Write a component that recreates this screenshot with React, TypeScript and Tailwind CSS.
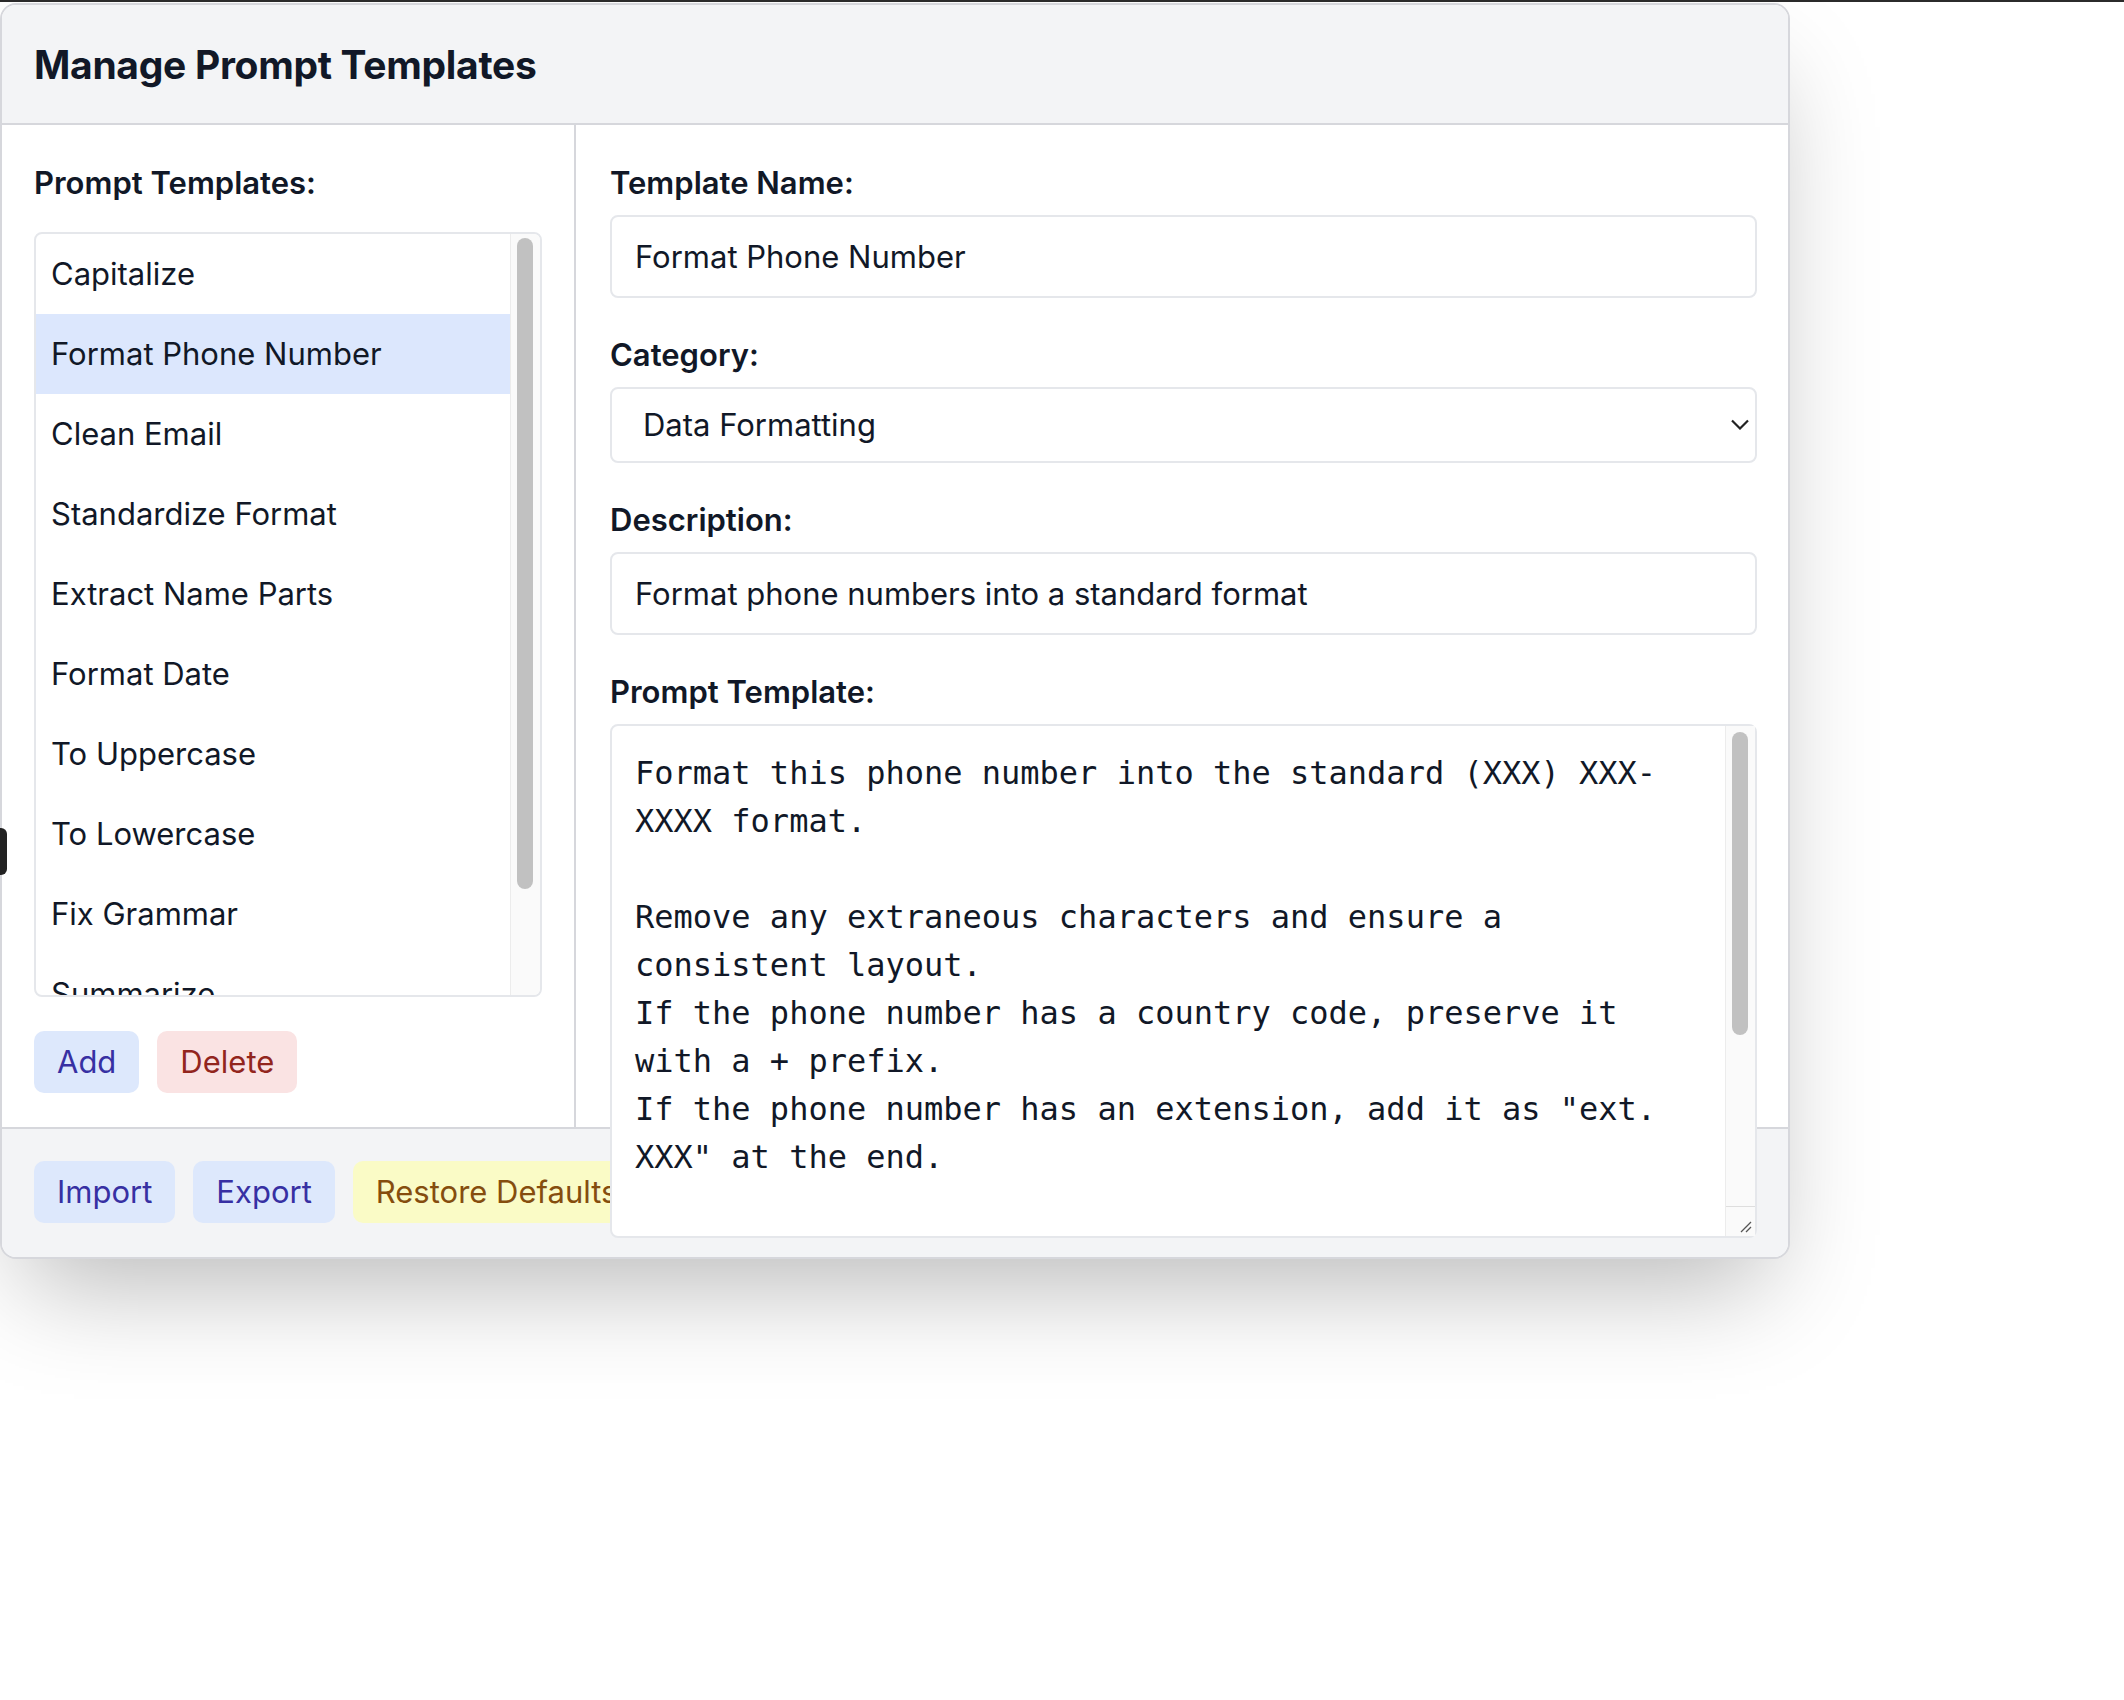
import { useState } from 'react';

const templates = [
  'Capitalize',
  'Format Phone Number',
  'Clean Email',
  'Standardize Format',
  'Extract Name Parts',
  'Format Date',
  'To Uppercase',
  'To Lowercase',
  'Fix Grammar',
  'Summarize',
  'Translate',
];

const promptText =
  'Format this phone number into the standard (XXX) XXX-XXXX format.\n\n' +
  'Remove any extraneous characters and ensure a consistent layout.\n' +
  'If the phone number has a country code, preserve it with a + prefix.\n' +
  'If the phone number has an extension, add it as "ext. XXX" at the end.\n\n' +
  'If the input is not a valid phone number, return it unchanged.\n\n' +
  'Return only the formatted phone number without any explanation.\n\n' +
  'Input: {{input}}';

export default function App() {
  const [selected, setSelected] = useState('Format Phone Number');
  const [name, setName] = useState('Format Phone Number');
  const [category, setCategory] = useState('Data Formatting');
  const [description, setDescription] = useState('Format phone numbers into a standard format');
  const [prompt, setPrompt] = useState(promptText);

  return (
    <div className="min-h-[1700px] bg-white font-['Inter',sans-serif] text-[#111827] relative">
      <div className="h-[2px] w-full bg-[#2b2b2b]" />
      <div className="absolute left-0 top-[828px] w-[7px] h-[47px] rounded-r-[6px] bg-[#222222]" />

      <div className="mt-[1px] w-[1790px] rounded-[16px] border-2 border-[#d6d7dc] bg-white shadow-[0_50px_100px_-24px_rgba(0,0,0,0.28)]">
        {/* header */}
        <div className="rounded-t-[14px] border-b-2 border-[#d6d7dc] bg-[#f3f4f6] px-[32px] pt-[36px] pb-[34px]">
          <h1 className="text-[39px] leading-[48px] font-bold tracking-[-0.3px]">Manage Prompt Templates</h1>
        </div>

        {/* body */}
        <div className="flex h-[1002px]">
          <div className="w-[574px] shrink-0 border-r-2 border-[#d6d7dc] px-[32px] pt-[34px] pb-[34px]">
            <div className="mb-[25px] text-[31px] leading-[48px] font-semibold">Prompt Templates:</div>
            <div className="flex h-[765px] overflow-hidden rounded-[8px] border-2 border-[#e5e7eb]">
              <div className="flex-1 overflow-hidden">
                {templates.map((t) => (
                  <div
                    key={t}
                    onClick={() => setSelected(t)}
                    className={`cursor-pointer px-[15px] py-[16px] text-[31px] leading-[48px] ${
                      selected === t ? 'bg-[#dce7fd]' : ''
                    }`}
                  >
                    {t}
                  </div>
                ))}
              </div>
              <div className="w-[30px] shrink-0 border-l border-[#ececec] bg-[#fafafa] pt-[4px] pl-[6px]">
                <div className="h-[651px] w-[16px] rounded-full bg-[#c1c1c1]" />
              </div>
            </div>
            <div className="mt-[34px] flex gap-[18px]">
              <button className="rounded-[10px] bg-[#dde8fc] px-[23px] py-[7px] text-[31px] leading-[48px] text-[#3730a3]">
                Add
              </button>
              <button className="rounded-[10px] bg-[#fae3e3] px-[23px] py-[7px] text-[31px] leading-[48px] text-[#92251d]">
                Delete
              </button>
            </div>
          </div>

          <div className="flex-1 pl-[34px] pr-[31px] pt-[34px]">
            <div className="mb-[33px]">
              <label className="mb-[8px] block text-[31px] leading-[48px] font-semibold">Template Name:</label>
              <input
                value={name}
                onChange={(e) => setName(e.target.value)}
                className="block h-[83px] w-full rounded-[8px] border-2 border-[#e5e7eb] px-[23px] text-[31px] outline-none"
              />
            </div>
            <div className="mb-[33px]">
              <label className="mb-[8px] block text-[31px] leading-[48px] font-semibold">Category:</label>
              <div className="relative">
                <select
                  value={category}
                  onChange={(e) => setCategory(e.target.value)}
                  className="block h-[76px] w-full appearance-none rounded-[8px] border-2 border-[#e5e7eb] bg-white pl-[31px] text-[31px] outline-none"
                >
                  <option>Data Formatting</option>
                  <option>Text Transformation</option>
                  <option>Extraction</option>
                  <option>Writing</option>
                </select>
                <svg
                  className="pointer-events-none absolute right-[7px] top-[31px]"
                  width="20"
                  height="12"
                  viewBox="0 0 20 12"
                  fill="none"
                >
                  <path d="M2 2.5l8 8 8-8" stroke="#222" strokeWidth="2.2" />
                </svg>
              </div>
            </div>
            <div className="mb-[33px]">
              <label className="mb-[8px] block text-[31px] leading-[48px] font-semibold">Description:</label>
              <input
                value={description}
                onChange={(e) => setDescription(e.target.value)}
                className="block h-[83px] w-full rounded-[8px] border-2 border-[#e5e7eb] px-[23px] text-[31px] outline-none"
              />
            </div>
            <div>
              <label className="mb-[8px] block text-[31px] leading-[48px] font-semibold">Prompt Template:</label>
              <div className="relative z-10">
                <textarea
                  value={prompt}
                  onChange={(e) => setPrompt(e.target.value)}
                  className="block h-[514px] w-full resize-none overflow-hidden rounded-[8px] border-2 border-[#e5e7eb] bg-white pt-[23px] pl-[23px] pr-[70px] font-['DejaVu_Sans_Mono',monospace] text-[32px] leading-[48px] outline-none"
                />
                {/* scrollbar */}
                <div className="absolute right-[2px] top-[2px] bottom-[2px] flex w-[30px] flex-col border-l border-[#ececec] bg-[#fafafa]">
                  <div className="flex-1 pt-[6px] pl-[6px]">
                    <div className="h-[303px] w-[16px] rounded-full bg-[#c1c1c1]" />
                  </div>
                  <div className="relative h-[30px] border-t border-[#dedede]">
                    <svg className="absolute right-[2px] bottom-[2px]" width="16" height="16" viewBox="0 0 16 16">
                      <path d="M4 14L14 4M9 14l5-5" stroke="#555" strokeWidth="1.3" />
                    </svg>
                  </div>
                </div>
              </div>
            </div>
          </div>
        </div>

        {/* footer */}
        <div className="flex gap-[18px] rounded-b-[14px] border-t-2 border-[#d6d7dc] bg-[#f3f4f6] px-[32px] pt-[32px] pb-[34px]">
          <button className="rounded-[10px] bg-[#dde8fc] px-[23px] py-[7px] text-[31px] leading-[48px] text-[#3730a3]">
            Import
          </button>
          <button className="rounded-[10px] bg-[#dde8fc] px-[23px] py-[7px] text-[31px] leading-[48px] text-[#3730a3]">
            Export
          </button>
          <button className="rounded-[10px] bg-[#fafbc6] px-[23px] py-[7px] text-[31px] leading-[48px] text-[#854d0e]">
            Restore Defaults
          </button>
        </div>
      </div>
    </div>
  );
}
